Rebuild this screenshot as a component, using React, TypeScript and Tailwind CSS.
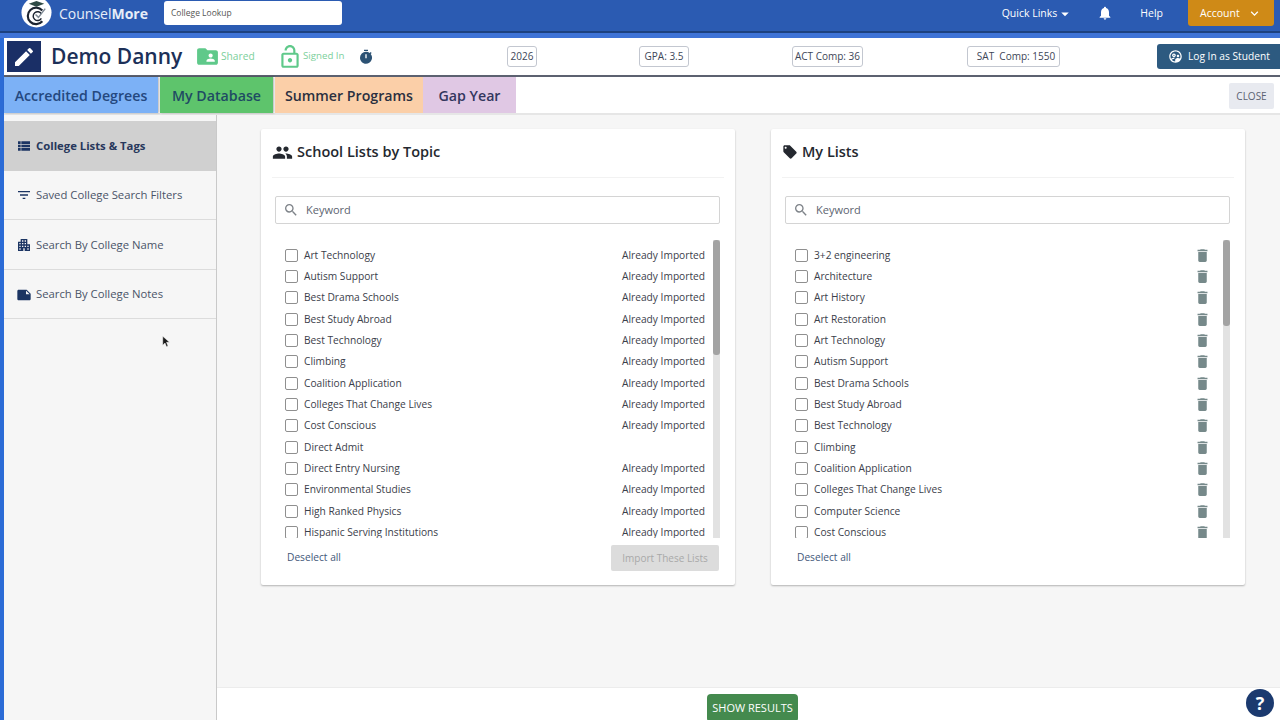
import {
  MdApartment,
  MdArrowDropDown,
  MdDelete,
  MdEdit,
  MdExpandMore,
  MdFilterList,
  MdFolderShared,
  MdLocalOffer,
  MdNote,
  MdNotifications,
  MdOutlineLockOpen,
  MdOutlineSupervisedUserCircle,
  MdPeople,
  MdSearch,
  MdTimer,
  MdViewList,
} from "react-icons/md"

const topicLists = [
  { name: "Art Technology", imported: true },
  { name: "Autism Support", imported: true },
  { name: "Best Drama Schools", imported: true },
  { name: "Best Study Abroad", imported: true },
  { name: "Best Technology", imported: true },
  { name: "Climbing", imported: true },
  { name: "Coalition Application", imported: true },
  { name: "Colleges That Change Lives", imported: true },
  { name: "Cost Conscious", imported: true },
  { name: "Direct Admit", imported: false },
  { name: "Direct Entry Nursing", imported: true },
  { name: "Environmental Studies", imported: true },
  { name: "High Ranked Physics", imported: true },
  { name: "Hispanic Serving Institutions", imported: true },
]

const myLists = [
  "3+2 engineering",
  "Architecture",
  "Art History",
  "Art Restoration",
  "Art Technology",
  "Autism Support",
  "Best Drama Schools",
  "Best Study Abroad",
  "Best Technology",
  "Climbing",
  "Coalition Application",
  "Colleges That Change Lives",
  "Computer Science",
  "Cost Conscious",
]

function Logo() {
  return (
    <svg viewBox="0 0 32 32" className="w-[31px] h-[31px] -mt-[3px] shrink-0">
      <circle cx="16" cy="16" r="15.5" fill="#fff" />
      <path d="M22 14a8.5 8.5 0 1 0 0 11" fill="none" stroke="#1c2430" strokeWidth="2.2" />
      <path d="M21 17.5a4.5 4.5 0 1 0 0 4.5" fill="none" stroke="#1c2430" strokeWidth="1.5" />
      <path d="M15 18l3 3 7-9" fill="none" stroke="#7f8a94" strokeWidth="1.5" />
      <path d="M8 7l8-3 8 3-8 3z" fill="#2f4a45" />
    </svg>
  )
}

function Stat({ children, className }: { children: React.ReactNode; className: string }) {
  return (
    <div className={`h-[21px] shrink-0 flex items-center justify-center border border-[#c3c7d0] rounded-[3px] text-[10px] text-[#3d4657] ${className}`}>
      {children}
    </div>
  )
}

function Tab({ label, className }: { label: string; className: string }) {
  return (
    <div className={`h-full flex items-center justify-center pt-[2px] text-[14.2px] font-semibold ${className}`}>{label}</div>
  )
}

function SideItem({ icon, label, active }: { icon: React.ReactNode; label: string; active?: boolean }) {
  return (
    <div className={`h-[49.6px] flex items-center pl-[11px] pt-[1px] gap-[3px] text-[11.3px] ${active ? "bg-[#d0d0d0] font-bold text-[#28385c]" : "border-b border-[#dcdcdc] text-[#4a5468]"}`}>
      <span className="w-[18px] flex justify-center text-[#1c3563] text-[16px]">{icon}</span>
      {label}
    </div>
  )
}

function Checkbox() {
  return <span className="w-[13px] h-[13px] shrink-0 border border-[#8f8f8f] rounded-[2px] bg-white" />
}

function SearchBox() {
  return (
    <div className="ml-[14px] mr-[15px] mt-[18px] h-[28px] flex items-center border border-[#d4d4d4] rounded-[2px] pl-[7px] gap-[7px] text-[11px] text-[#5d6470]">
      <MdSearch className="text-[16px] text-[#7d8288]" />
      Keyword
    </div>
  )
}

function Scrollbar({ thumb }: { thumb: string }) {
  return (
    <div className="w-[7px] shrink-0 bg-[#e2e2e2]">
      <div className={`w-full rounded-[3px] bg-[#a3a3a3] ${thumb}`} />
    </div>
  )
}

function ListCard({ icon, title, children, footer, thumb }: {
  icon: React.ReactNode
  title: string
  children: React.ReactNode
  footer: React.ReactNode
  thumb: string
}) {
  return (
    <div className="w-[474px] h-[456px] bg-white rounded-[2px] shadow-[0_1px_2px_rgba(0,0,0,0.28)] flex flex-col">
      <div className="h-[49px] mx-[11px] pb-[2px] flex items-center gap-[4px] border-b border-[#f2f2f2] text-[14.5px] font-semibold text-[#24282f]">
        {icon}
        {title}
      </div>
      <SearchBox />
      <div className="h-[298px] ml-[14px] mr-[15px] mt-[16px] flex">
        <div className="flex-1 overflow-hidden pl-[10px] pt-[4.5px] text-[10.2px] text-[#3b404a]">{children}</div>
        <Scrollbar thumb={thumb} />
      </div>
      {footer}
    </div>
  )
}

function App() {
  return (
    <div className="w-[1280px] h-[720px] overflow-hidden relative flex flex-col bg-[#f6f6f6] font-['Open_Sans',sans-serif]">
      <div className="h-[33px] shrink-0 bg-[#2b5bb2] border-b-2 border-[#1d417f] flex items-start text-white text-[10.5px]">
        <div className="ml-[21px] flex items-start gap-[7px]">
          <Logo />
          <div className="text-[14px] mt-[3px] text-[#e6edf8]">
            Counsel<span className="font-bold">More</span>
          </div>
        </div>
        <div className="ml-[16px] mt-[1px] w-[178px] h-[24px] bg-white rounded-[3px] flex items-center pl-[7px] text-[8.5px] text-[#555]">
          College Lookup
        </div>
        <div className="ml-auto mt-[5px] flex items-center">
          Quick Links
          <MdArrowDropDown className="text-[18px] ml-[-1px]" />
        </div>
        <MdNotifications className="ml-[23px] mt-[5px] text-[16px]" />
        <div className="ml-[27px] mt-[6px]">Help</div>
        <div className="ml-[25px] mr-[6px] w-[86px] h-[26px] bg-[#cf8a17] rounded-b-[3px] flex items-center pl-[12px] pt-[1px]">
          Account
          <MdExpandMore className="ml-[7px] text-[15px]" />
        </div>
      </div>
      <div className="h-[5px] shrink-0 bg-[#3f73d6]" />

      <div className="flex-1 flex min-h-0 border-l-[4px] border-[#2b6bd6]">
        <div className="flex-1 flex flex-col min-w-0">
          <div className="h-[39px] shrink-0 bg-white border-b-2 border-[#5c6170] flex items-center">
            <div className="ml-[3px] w-[34px] h-[31px] bg-[#1a2f66] flex items-center justify-center text-white">
              <MdEdit className="text-[24px]" />
            </div>
            <div className="ml-[10px] w-[144px] text-[21px] font-semibold leading-none text-[#1c3058]">Demo Danny</div>
            <MdFolderShared className="text-[25px] text-[#5fc98a]" />
            <span className="ml-[1px] w-[56px] text-[10.2px] text-[#7ccf9b]">Shared</span>
            <MdOutlineLockOpen className="text-[26px] text-[#5fc98a]" />
            <span className="w-[55px] text-[9.7px] text-[#7ccf9b]">Signed In</span>
            <MdTimer className="text-[16px] text-[#2c5274]" />
            <Stat className="ml-[133px] w-[30px]">2026</Stat>
            <Stat className="ml-[102px] w-[50px]">GPA: 3.5</Stat>
            <Stat className="ml-[103px] w-[71px]">ACT Comp: 36</Stat>
            <Stat className="ml-[104px] w-[93px] pl-[5px] whitespace-pre">SAT  Comp: 1550</Stat>
            <div className="ml-auto w-[123px] h-[25px] bg-[#2d5a80] rounded-l-[3px] flex items-center pl-[11px] gap-[5px] text-[10.2px] text-white">
              <MdOutlineSupervisedUserCircle className="text-[15px]" />
              Log In as Student
            </div>
          </div>

          <div className="h-[38px] shrink-0 bg-white border-b-2 border-[#e6e6e6] flex items-start">
            <div className="h-[36px] flex">
              <Tab label="Accredited Degrees" className="w-[154px] bg-[#7cb1f6] text-[#24487f] shadow-[1px_0_2px_rgba(0,0,0,0.3)]" />
              <Tab label="My Database" className="ml-[2px] w-[113px] bg-[#5ec46c] text-[#1e4b63] shadow-[1px_0_2px_rgba(0,0,0,0.3)]" />
              <Tab label="Summer Programs" className="ml-[2px] w-[148px] bg-[#fbcfa8] text-[#2b3040]" />
              <Tab label="Gap Year" className="w-[93px] bg-[#e0c8e4] text-[#33365e]" />
            </div>
            <div className="ml-auto mr-[6px] mt-[6px] w-[45px] h-[26px] bg-[#e8eaf0] rounded-[2px] flex items-center justify-center text-[10px] text-[#5b6272]">
              CLOSE
            </div>
          </div>

          <div className="flex-1 flex min-h-0">
            <div className="w-[213px] shrink-0 border-r border-[#c9c9c9] pt-[6px]">
              <SideItem active icon={<MdViewList />} label="College Lists & Tags" />
              <SideItem icon={<MdFilterList />} label="Saved College Search Filters" />
              <SideItem icon={<MdApartment />} label="Search By College Name" />
              <SideItem icon={<MdNote />} label="Search By College Notes" />
            </div>

            <div className="flex-1 flex flex-col min-w-0">
              <div className="flex-1 flex gap-[36px] pl-[44px] pt-[14px]">
                <ListCard
                  icon={<MdPeople className="text-[21px]" />}
                  title="School Lists by Topic"
                  thumb="h-[115px]"
                  footer={
                    <div className="ml-[26px] mr-[16px] mt-[7px] flex items-center justify-between text-[10.2px]">
                      <span className="text-[#43587a]">Deselect all</span>
                      <span className="w-[108px] h-[26px] bg-[#dcdcdc] rounded-[2px] flex items-center justify-center text-[10px] text-[#a9a9a9]">
                        Import These Lists
                      </span>
                    </div>
                  }
                >
                  {topicLists.map((item) => (
                    <div key={item.name} className="h-[21.35px] flex items-center gap-[6px] pr-[8px]">
                      <Checkbox />
                      <span>{item.name}</span>
                      {item.imported && <span className="ml-auto">Already Imported</span>}
                    </div>
                  ))}
                </ListCard>
                <ListCard
                  icon={<MdLocalOffer className="text-[16px]" />}
                  title="My Lists"
                  thumb="h-[86px]"
                  footer={
                    <div className="mx-[26px] mt-[12px] text-[10.2px] text-[#43587a]">Deselect all</div>
                  }
                >
                  {myLists.map((name) => (
                    <div key={name} className="h-[21.35px] flex items-center gap-[6px] pr-[12px]">
                      <Checkbox />
                      <span>{name}</span>
                      <MdDelete className="ml-auto text-[17px] text-[#76898a]" />
                    </div>
                  ))}
                </ListCard>
              </div>
              <div className="h-[33px] shrink-0 bg-white border-t border-[#ececec] flex items-start pl-[490px] pt-[6px]">
                <div className="w-[91px] h-[28px] bg-[#448a4e] rounded-[4px] flex items-center justify-center text-[11px] text-white">
                  SHOW RESULTS
                </div>
              </div>
            </div>
          </div>
        </div>
      </div>

      <div className="absolute left-[1246px] top-[689px] w-[28px] h-[28px] rounded-full bg-[#1b3a6f] flex items-center justify-center text-[18px] font-bold text-white">
        ?
      </div>
      <svg viewBox="0 0 12 16" className="absolute left-[162px] top-[335px] w-[9px] h-[13px]">
        <path d="M1 1v12l3-3 2 5 2-1-2-5h4z" fill="#1a1a1a" stroke="#fff" strokeWidth="0.6" />
      </svg>
    </div>
  )
}

export default App
